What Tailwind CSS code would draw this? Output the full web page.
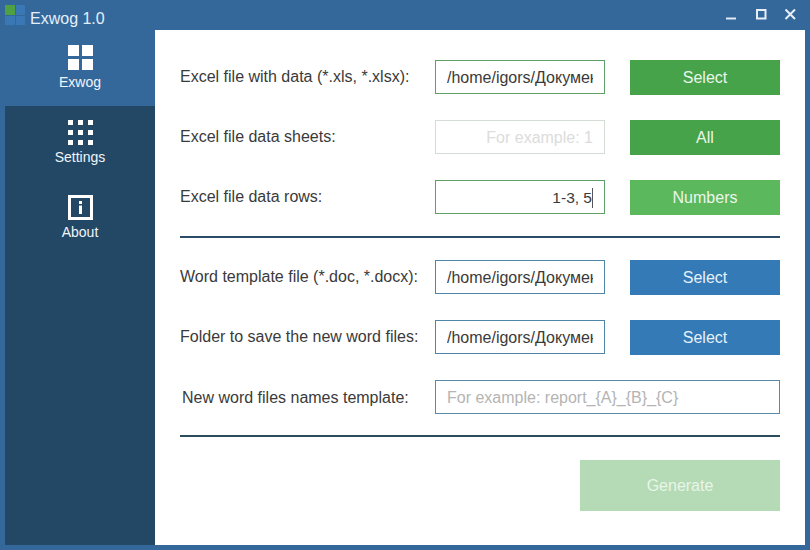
<!DOCTYPE html>
<html>
<head>
<meta charset="utf-8">
<script src="https://cdn.jsdelivr.net/npm/@tailwindcss/browser@4"></script>
</head>
<body class="m-0">
<div class="w-[810px] h-[550px] bg-[#35689a] flex flex-col overflow-hidden font-['Liberation_Sans',Arial,sans-serif] text-[16px] text-[#3a3a3a]">
  <header class="h-[30px] flex items-center shrink-0">
    <div class="ml-[5px] grid grid-cols-2 gap-px w-[20px] h-[20px]">
      <div class="bg-[#4f9f45]"></div><div class="bg-[#3a78b5]"></div>
      <div class="bg-[#3a78b5]"></div><div class="bg-[#3a78b5]"></div>
    </div>
    <span class="ml-[5px] text-[16px] text-[#e3f0fa] mt-[7px]">Exwog 1.0</span>
    <div class="ml-auto mr-[13px] flex items-center gap-[15px] -mt-[2px]">
      <svg width="16" height="16" viewBox="0 0 16 16" fill="none"><path d="M3 12.5H13" stroke="#dfeaf4" stroke-width="2"/></svg>
      <svg width="14" height="14" viewBox="0 0 14 14" fill="none"><rect x="3" y="3" width="8.5" height="8.5" stroke="#e6eff7" stroke-width="2"/></svg>
      <svg width="14" height="14" viewBox="0 0 14 14" fill="none"><path d="M2.5 2.5L12 12M12 2.5L2.5 12" stroke="#e6eff7" stroke-width="2"/></svg>
    </div>
  </header>
  <div class="flex h-[515px] mx-[5px]">
    <nav class="w-[150px] bg-[#234866] flex flex-col text-[14px] text-[#f0f5fa]">
      <div class="h-[76px] bg-[#35689a] flex flex-col items-center pt-[15px] -ml-[5px] pl-[5px]">
        <svg width="25" height="25" viewBox="0 0 25 25" fill="#fff"><rect width="11" height="11"/><rect x="14" width="11" height="11"/><rect y="14" width="11" height="11"/><rect x="14" y="14" width="11" height="11"/></svg>
        <span class="mt-[2px] leading-[20px]">Exwog</span>
      </div>
      <div class="h-[75px] flex flex-col items-center pt-[14px]">
        <svg width="25" height="25" viewBox="0 0 25 25" fill="#fff"><rect width="5" height="5"/><rect x="10" width="5" height="5"/><rect x="20" width="5" height="5"/><rect y="10" width="5" height="5"/><rect x="10" y="10" width="5" height="5"/><rect x="20" y="10" width="5" height="5"/><rect y="20" width="5" height="5"/><rect x="10" y="20" width="5" height="5"/><rect x="20" y="20" width="5" height="5"/></svg>
        <span class="mt-[2px] leading-[20px]">Settings</span>
      </div>
      <div class="h-[75px] flex flex-col items-center pt-[14px]">
        <svg width="25" height="25" viewBox="0 0 25 25" fill="none"><rect x="1.5" y="1.5" width="22" height="22" stroke="#fff" stroke-width="3"/><rect x="11" y="6" width="3" height="3" fill="#fff"/><rect x="11" y="10.5" width="3" height="8.5" fill="#fff"/></svg>
        <span class="mt-[2px] leading-[20px]">About</span>
      </div>
    </nav>
    <main class="w-[650px] bg-white pl-[25px] pr-[25px] pt-[30px]">
      <div class="flex items-start h-[35px] mb-[25px]">
        <label class="w-[255px] h-[34px] flex items-center">Excel file with data (*.xls, *.xlsx):</label>
        <input class="w-[170px] h-[34px] border border-[#5f9f68] px-[11px] pt-px outline-none text-[#3a3a3a]" value="/home/igors/Документы/data.xlsx">
        <button class="ml-[25px] w-[150px] h-[35px] bg-[#46a34a] text-[#eaf6ea]">Select</button>
      </div>
      <div class="flex items-start h-[35px] mb-[25px]">
        <label class="w-[255px] h-[34px] flex items-center">Excel file data sheets:</label>
        <input class="w-[170px] h-[34px] border border-[#d5dcd6] px-[11px] pt-px outline-none text-right placeholder:text-[#dcdcdc]" placeholder="For example: 1">
        <button class="ml-[25px] w-[150px] h-[35px] bg-[#46a34a] text-[#eaf6ea]">All</button>
      </div>
      <div class="flex items-start h-[35px]">
        <label class="w-[255px] h-[34px] flex items-center">Excel file data rows:</label>
        <div class="w-[170px] h-[34px] border border-[#5f9f68] pr-[11px] pt-px flex items-center justify-end text-[15.5px]"><span class="border-r border-[#555] leading-[20px]">1-3, 5</span></div>
        <button class="ml-[25px] w-[150px] h-[35px] bg-[#5cb85c] text-[#eaf6ea]">Numbers</button>
      </div>
      <div class="h-[2px] w-[600px] bg-[#2b4c68] mt-[21px] mb-[22px]"></div>
      <div class="flex items-start h-[35px] mb-[25px]">
        <label class="w-[255px] h-[34px] flex items-center">Word template file (*.doc, *.docx):</label>
        <input class="w-[170px] h-[34px] border border-[#4f86a8] px-[11px] pt-px outline-none text-[#3a3a3a]" value="/home/igors/Документы/tpl.docx">
        <button class="ml-[25px] w-[150px] h-[35px] bg-[#337ab7] text-[#e6f0f8]">Select</button>
      </div>
      <div class="flex items-start h-[35px] mb-[25px]">
        <label class="w-[255px] h-[34px] flex items-center">Folder to save the new word files:</label>
        <input class="w-[170px] h-[34px] border border-[#4f86a8] px-[11px] pt-px outline-none text-[#3a3a3a]" value="/home/igors/Документы/result">
        <button class="ml-[25px] w-[150px] h-[35px] bg-[#337ab7] text-[#e6f0f8]">Select</button>
      </div>
      <div class="flex items-start h-[34px]">
        <label class="w-[255px] h-[34px] flex items-center pl-[2px] pt-px">New word files names template:</label>
        <input class="w-[345px] h-[34px] border border-[#5a8ba6] px-[11px] pt-px outline-none placeholder:text-[#b4b4b4]" placeholder="For example: report_{A}_{B}_{C}">
      </div>
      <div class="h-[2px] w-[600px] bg-[#2b4c5c] mt-[21px] mb-[23px]"></div>
      <div class="flex justify-end w-[600px]">
        <button class="w-[200px] h-[51px] bg-[#b5dbb6] text-[#e8f5e8] text-[16px]">Generate</button>
      </div>
    </main>
  </div>
</div>
</body>
</html>
